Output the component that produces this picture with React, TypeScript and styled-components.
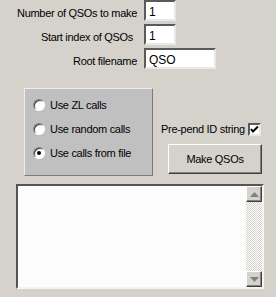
import styled, { createGlobalStyle } from "styled-components";

const GlobalStyle = createGlobalStyle`
  html, body {
    margin: 0;
    padding: 0;
    background: #d5d2cc;
  }
  body {
    font-family: "Liberation Sans", Arial, sans-serif;
    font-size: 11px;
    letter-spacing: -0.3px;
    color: #000;
  }
`;

const fields = [
  { label: "Number of QSOs to make", value: "1", width: 32, pad: 0 },
  { label: "Start index of QSOs", value: "1", width: 32, pad: 4 },
  { label: "Root filename", value: "QSO", width: 72, pad: 0 },
];

const radios = [
  { label: "Use ZL calls", checked: false },
  { label: "Use random calls", checked: false },
  { label: "Use calls from file", checked: true },
];

export default function App() {
  return (
    <Window>
      <GlobalStyle />
      <FieldGrid>
        {fields.map((f) => (
          <FieldRow key={f.label}>
            <FieldLabel $pad={f.pad}>{f.label}</FieldLabel>
            <TextBox $width={f.width} defaultValue={f.value} />
          </FieldRow>
        ))}
      </FieldGrid>

      <Middle>
        <RadioPanel>
          {radios.map((r) => (
            <RadioRow key={r.label}>
              <RadioCircle>{r.checked && <RadioDot />}</RadioCircle>
              <span>{r.label}</span>
            </RadioRow>
          ))}
        </RadioPanel>
        <RightColumn>
          <CheckRow>
            <span>Pre-pend ID string</span>
            <CheckBox>
              <svg width="9" height="9" viewBox="0 0 9 9">
                <path d="M1 4 L3 6.5 L8 1.5" stroke="#000" strokeWidth="2" fill="none" />
              </svg>
            </CheckBox>
          </CheckRow>
          <Button>Make QSOs</Button>
        </RightColumn>
      </Middle>

      <LogBox>
        <LogText />
        <ScrollBar>
          <ScrollButton>
            <svg width="9" height="5" viewBox="0 0 9 5">
              <path d="M4.5 0 L9 5 L0 5 Z" fill="#808080" />
            </svg>
          </ScrollButton>
          <ScrollTrack />
          <ScrollButton>
            <svg width="9" height="5" viewBox="0 0 9 5">
              <path d="M0 0 L9 0 L4.5 5 Z" fill="#808080" />
            </svg>
          </ScrollButton>
        </ScrollBar>
      </LogBox>
    </Window>
  );
}

const Window = styled.div`
  width: 276px;
  height: 297px;
  overflow: hidden;
  display: flex;
  flex-direction: column;
`;

const FieldGrid = styled.div`
  display: flex;
  flex-direction: column;
  gap: 3px;
`;

const FieldRow = styled.div`
  display: grid;
  grid-template-columns: 137px auto;
  column-gap: 7px;
  align-items: start;
  height: 21px;
`;

const FieldLabel = styled.span<{ $pad: number }>`
  text-align: right;
  padding-right: ${(p) => p.$pad}px;
  padding-top: 8px;
  line-height: 11px;
  white-space: nowrap;
`;

const TextBox = styled.input<{ $width: number }>`
  box-sizing: border-box;
  width: ${(p) => p.$width}px;
  height: 21px;
  margin: 0;
  padding: 2px 3px 0;
  font-family: "Liberation Sans", Arial, sans-serif;
  font-size: 12px;
  background: #fff;
  border: 2px solid;
  border-color: #5a5a5a #e8e8e8 #e8e8e8 #5a5a5a;
  outline: none;
`;

const Middle = styled.div`
  display: flex;
  margin-top: 19px;
  padding-left: 24px;
  gap: 8px;
`;

const RadioPanel = styled.div`
  box-sizing: border-box;
  width: 129px;
  height: 88px;
  padding: 4px 0 0 8px;
  background: #c0c0c0;
  border: 1px solid;
  border-color: #ececec #7a7a7a #7a7a7a #ececec;
  display: flex;
  flex-direction: column;
`;

const RadioRow = styled.div`
  display: flex;
  align-items: center;
  gap: 5px;
  height: 24px;
`;

const RadioCircle = styled.div`
  box-sizing: border-box;
  width: 12px;
  height: 12px;
  border-radius: 50%;
  background: #fff;
  border: 1px solid;
  border-color: #808080 #fff #fff #808080;
  box-shadow: inset 1px 1px 0 #404040;
  display: flex;
  align-items: center;
  justify-content: center;
`;

const RadioDot = styled.div`
  width: 4px;
  height: 4px;
  border-radius: 50%;
  background: #000;
`;

const RightColumn = styled.div`
  display: flex;
  flex-direction: column;
  padding-top: 34px;
`;

const CheckRow = styled.div`
  display: flex;
  align-items: center;
  gap: 3px;
  height: 14px;
`;

const CheckBox = styled.div`
  box-sizing: border-box;
  width: 13px;
  height: 13px;
  background: #fff;
  border: 2px solid;
  border-color: #5a5a5a #e8e8e8 #e8e8e8 #5a5a5a;
  display: flex;
  align-items: center;
  justify-content: center;
`;

const Button = styled.button`
  box-sizing: border-box;
  width: 94px;
  height: 30px;
  margin: 8px 0 0 7px;
  font-family: "Liberation Sans", Arial, sans-serif;
  font-size: 11px;
  letter-spacing: -0.3px;
  color: #000;
  background: #d5d2cc;
  border: 1px solid;
  border-color: #fff #404040 #404040 #fff;
  box-shadow: inset -1px -1px 0 #808080;
  padding: 0;
`;

const LogBox = styled.div`
  box-sizing: border-box;
  display: flex;
  width: 248px;
  height: 105px;
  margin: 8px 0 0 16px;
  background: #fff;
  border: 2px solid;
  border-color: #555 #f4f4f4 #f4f4f4 #555;
`;

const LogText = styled.div`
  flex: 1;
  background: #fcfcfc;
`;

const ScrollBar = styled.div`
  width: 16px;
  display: flex;
  flex-direction: column;
`;

const ScrollButton = styled.div`
  box-sizing: border-box;
  height: 16px;
  background: #d5d2cc;
  border: 1px solid;
  border-color: #fff #404040 #404040 #fff;
  box-shadow: inset -1px -1px 0 #808080;
  display: flex;
  align-items: center;
  justify-content: center;
`;

const ScrollTrack = styled.div`
  flex: 1;
  background: repeating-conic-gradient(#fff 0 25%, #d5d2cc 0 50%) 0 0 / 2px 2px;
`;
